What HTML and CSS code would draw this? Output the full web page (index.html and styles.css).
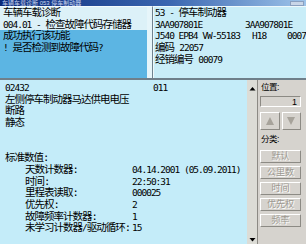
FILE: index.html
```html
<!DOCTYPE html>
<html>
<head>
<meta charset="utf-8">
<link rel="stylesheet" href="styles.css">
</head>
<body>
<div class="app">
  <div class="titlebar"><span class="ttext">车辆车载诊断 053 停车制动器</span><span class="tbtn"></span></div>
  <div class="top">
    <div class="pane-left">
      <div class="rows">
        <div class="row light">车辆车载诊断</div>
        <div class="row light"><span class="m">004.01 - </span>检查故障代码存储器</div>
        <div class="sel">
          <div class="row">成功执行该功能</div>
          <div class="row"><span class="m">! </span>是否检测到故障代码<span class="m">?</span></div>
        </div>
      </div>
      <div class="strip"></div>
    </div>
    <div class="pane-right">
      <div class="row"><span class="m">53 - </span>停车制动器</div>
      <div class="row info m"><span class="c1">3AA907801E</span><span>3AA907801E</span></div>
      <div class="row info m"><span class="c1 wide">J540 EPB4 VW-55183</span><span class="c3">H18</span><span>0007</span></div>
      <div class="row">编码 <span class="m">22057</span></div>
      <div class="row">经销编号 <span class="m">00079</span></div>
    </div>
  </div>
  <div class="bottom">
    <div class="list">
      <div class="row first m"><span class="code">02432</span><span>011</span></div>
      <div class="row">左侧停车制动器马达供电电压</div>
      <div class="row">断路</div>
      <div class="row">静态</div>
      <div class="row"></div>
      <div class="row"></div>
      <div class="row">标准数值:</div>
      <div class="kv"><span>天数计数器:</span><span class="m">04.14.2001 (05.09.2011)</span></div>
      <div class="kv"><span>时间:</span><span class="m">22:50:31</span></div>
      <div class="kv"><span>里程表读取:</span><span class="m">000025</span></div>
      <div class="kv"><span>优先权:</span><span class="m">2</span></div>
      <div class="kv"><span>故障频率计数器:</span><span class="m">1</span></div>
      <div class="kv"><span>未学习计数器<span class="m">/</span>驱动循环:</span><span class="m">15</span></div>
    </div>
    <div class="vscroll">
      <svg width="9" height="9" viewBox="0 0 9 9"><path d="M1.5 6.5 L4.5 3 L7.5 6.5 Z" fill="#000"/></svg>
      <svg width="9" height="9" viewBox="0 0 9 9"><path d="M1.5 3 L4.5 6.5 L7.5 3 Z" fill="#000"/></svg>
    </div>
    <div class="side">
      <div class="lbl">位置:</div>
      <div class="pos">1</div>
      <div class="arrows">
        <div class="abtn"><svg width="10" height="10" viewBox="0 0 10 10"><path d="M1 9 L5 1 L9 9 Z" fill="#a7a39b"/></svg></div>
        <div class="abtn"><svg width="10" height="10" viewBox="0 0 10 10"><path d="M1 1 L5 9 L9 1 Z" fill="#a7a39b"/></svg></div>
      </div>
      <div class="lbl cat">分类:</div>
      <div class="btns">
        <div class="btn">默认</div>
        <div class="btn">公里数</div>
        <div class="btn">时间</div>
        <div class="btn">优先权</div>
        <div class="btn">频率</div>
      </div>
    </div>
  </div>
</div>
</body>
</html>
```
FILE: styles.css
```css
html, body {
  margin: 0;
  padding: 0;
  background: #c4ecf9;
}
.app {
  width: 306px;
  height: 244px;
  overflow: hidden;
  font-family: "DejaVu Sans Mono", "Noto Sans CJK SC", monospace;
  font-size: 10.5px;
  letter-spacing: -1px;
  color: #000;
  display: flex;
  flex-direction: column;
}
.m {
  font-size: 9.5px;
  letter-spacing: -1px;
}
.titlebar {
  height: 6px;
  background: linear-gradient(90deg, #0b2a78 0%, #3a66b0 55%, #9ec4ea 100%);
  display: flex;
  align-items: center;
  overflow: hidden;
}
.ttext {
  font-family: "Liberation Sans", "Noto Sans CJK SC", sans-serif;
  font-size: 6px;
  line-height: 6px;
  color: #c8d4f0;
  letter-spacing: 0;
  padding-left: 2px;
  flex: 1;
}
.tbtn {
  width: 14px;
  height: 5px;
  margin-right: 2px;
  background: #c9d6e8;
  border: 1px solid #8aa0c0;
  box-sizing: border-box;
}
.top {
  height: 72px;
  display: flex;
  border-bottom: 2px solid #6f7f8a;
}
.pane-left {
  width: 152px;
  display: flex;
  border-right: 1px solid #6f8390;
  background: #dff3f9;
  border-top: 1px solid #f4fbfd;
}
.rows {
  flex: 1;
  display: flex;
  flex-direction: column;
}
.row {
  height: 11.7px;
  line-height: 11.7px;
  white-space: nowrap;
  padding-left: 3px;
}
.light {
  background: #dcf1f8;
}
.sel {
  flex: 1;
  background: #5cb5e3;
}
.strip {
  width: 5px;
  background: #e6f5fa;
}
.pane-right {
  flex: 1;
  background: #c9edf8;
  border-left: 1px solid #eef9fc;
  border-top: 1px solid #eef9fc;
}
.pane-right .row {
  padding-left: 1px;
}
.info {
  display: flex;
}
.c1 {
  width: 90px;
}
.c1.wide {
  width: 97px;
}
.c3 {
  width: 35px;
}
.bottom {
  flex: 1;
  display: flex;
}
.list {
  width: 242px;
  padding: 2px 0 0 5px;
  background: #c4ecf9;
}
.first {
  display: flex;
}
.list .row {
  padding-left: 0;
}
.code {
  width: 148px;
}
.kv {
  display: grid;
  grid-template-columns: 107px auto;
  padding-left: 20px;
  height: 11.7px;
  line-height: 11.7px;
  white-space: nowrap;
}
.vscroll {
  width: 10px;
  background: #dcdcd6;
  border-right: 1px solid #8c8a84;
  display: flex;
  flex-direction: column;
  justify-content: space-between;
  align-items: center;
  padding: 4px 0 0;
}
.vscroll svg {
  display: block;
}
.side {
  flex: 1;
  background: #d6d3ce;
  padding: 2px 5px 0 2px;
  display: flex;
  flex-direction: column;
  font-family: "Liberation Sans", "Noto Sans CJK SC", sans-serif;
}
.lbl {
  height: 11px;
  line-height: 11px;
  font-size: 8.5px;
  letter-spacing: -0.5px;
  padding-left: 1px;
}
.pos {
  margin-top: 3px;
  height: 11px;
  line-height: 10px;
  box-sizing: border-box;
  border: 1px solid;
  border-color: #8c8a84 #fff #fff #8c8a84;
  text-align: right;
  padding-right: 3px;
  font-size: 9px;
  letter-spacing: 0;
}
.arrows {
  margin-top: 5px;
  display: flex;
  gap: 2px;
}
.abtn {
  flex: 1;
  height: 18px;
  box-sizing: border-box;
  border: 1px solid;
  border-color: #fff #8c8a84 #8c8a84 #fff;
  display: flex;
  align-items: center;
  justify-content: center;
}
.cat {
  margin-top: 4px;
}
.btns {
  margin-top: 5px;
  display: flex;
  flex-direction: column;
  gap: 3px;
}
.btn {
  height: 13px;
  box-sizing: border-box;
  border: 1px solid;
  border-color: #fff #8c8a84 #8c8a84 #fff;
  text-align: center;
  line-height: 11px;
  font-size: 9px;
  letter-spacing: 0;
  color: #9d9991;
  text-shadow: 1px 1px 0 #fff;
}
```
